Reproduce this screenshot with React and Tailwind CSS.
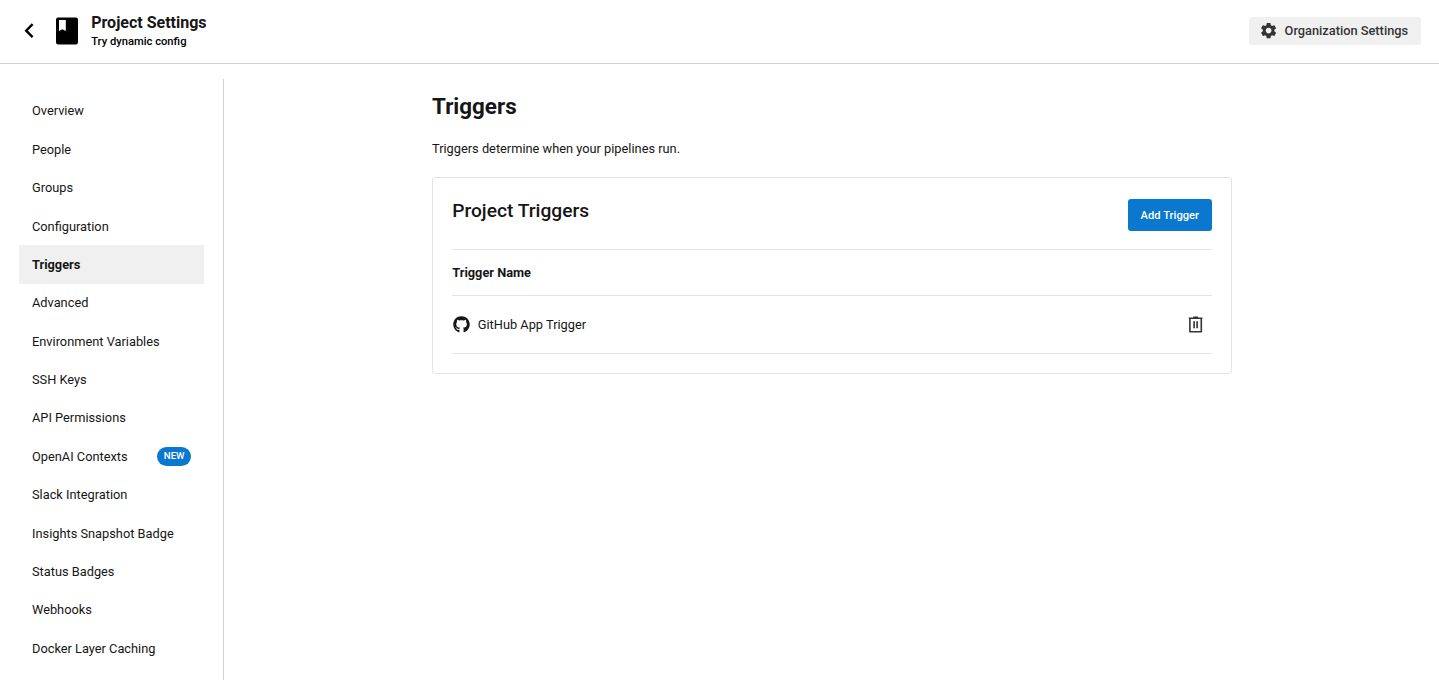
import React from "react";
import { FaGithub } from "react-icons/fa";
import { MdSettings } from "react-icons/md";

const NAV_ITEMS = [
  { label: "Overview" },
  { label: "People" },
  { label: "Groups" },
  { label: "Configuration" },
  { label: "Triggers", active: true },
  { label: "Advanced" },
  { label: "Environment Variables" },
  { label: "SSH Keys" },
  { label: "API Permissions" },
  { label: "OpenAI Contexts", badge: "NEW" },
  { label: "Slack Integration" },
  { label: "Insights Snapshot Badge" },
  { label: "Status Badges" },
  { label: "Webhooks" },
  { label: "Docker Layer Caching" },
];

function BackIcon() {
  return (
    <svg width="10" height="16" viewBox="0 0 10 16" fill="none" stroke="#000" strokeWidth="2.4">
      <path d="M8.6 1.2 2.2 7.7l6.4 6.5" />
    </svg>
  );
}

function ProjectIcon() {
  return (
    <svg width="22" height="28" viewBox="0 -0.5 22 28">
      <path
        fill="#000"
        fillRule="evenodd"
        d="M2.2 0h17.6A2.2 2.2 0 0 1 22 2.2v22.6a2.2 2.2 0 0 1-2.2 2.2H2.2A2.2 2.2 0 0 1 0 24.8V2.2A2.2 2.2 0 0 1 2.2 0ZM3 2.5v11l3.4-1.7 3.4 1.7v-11Z"
      />
    </svg>
  );
}

function TrashIcon() {
  return (
    <svg width="16" height="18" viewBox="0 0 16 18" fill="none" stroke="#343434">
      <path strokeWidth="1.5" d="M.8 2.2h13.6M5.2 1.2h4.8" />
      <path strokeWidth="1.6" strokeLinejoin="round" d="M1.9 2.2v13.5h11.4V2.2" />
      <path strokeWidth="1.6" d="M6.1 5.3v7M9.1 5.3v7" />
    </svg>
  );
}

function Header() {
  return (
    <header className="flex h-16 shrink-0 items-start justify-between border-b border-[#d0d0d0] pl-6 pr-[18px]">
      <div className="flex items-start">
        <button className="mt-[23px]" aria-label="Back">
          <BackIcon />
        </button>
        <div className="ml-[22.2px] mt-[17px]">
          <ProjectIcon />
        </div>
        <div className="ml-[13px] mt-[13px]">
          <h1 className="text-[16px] font-bold leading-[20px]">Project Settings</h1>
          <p className="text-[11.2px] font-medium leading-[18px] text-black">Try dynamic config</p>
        </div>
      </div>
      <button className="mt-[17px] flex h-7 w-[172px] items-center rounded-[3px] bg-[#f0f0f0] pl-[10px] text-[12.8px] font-medium text-[#343434]">
        <MdSettings className="mr-[6.4px] size-[19.2px]" />
        Organization Settings
      </button>
    </header>
  );
}

function Sidebar() {
  return (
    <nav className="mt-[15px] w-[224px] shrink-0 border-r border-[#d0d0d0] pl-[19.2px] pr-[19px] pt-[12.75px]">
      {NAV_ITEMS.map((item) => (
        <a
          key={item.label}
          className={
            "flex h-[38.4px] items-center justify-between px-[12.8px] text-[12.8px] " +
            (item.active ? "bg-[#f0f0f0] font-bold" : "")
          }
        >
          {item.label}
          {item.badge && (
            <span className="flex h-[19px] w-[34px] items-center justify-center rounded-full bg-[#0b78cf] text-[9.6px] font-medium text-white">
              {item.badge}
            </span>
          )}
        </a>
      ))}
    </nav>
  );
}

function TriggersCard() {
  return (
    <section className="mt-[19px] h-[197px] rounded-[3px] border border-[#e3e3e3] px-[19.2px]">
      <div className="flex h-[72px] items-start justify-between border-b border-[#e3e3e3]">
        <h3 className="mt-[21px] text-[19.2px] font-medium leading-6">Project Triggers</h3>
        <button className="mt-[21px] h-8 w-[84px] rounded-[3px] bg-[#0b78cf] pt-0.5 text-[11.2px] font-medium text-white">
          Add Trigger
        </button>
      </div>
      <div className="flex h-[46px] items-center border-b border-[#e3e3e3] text-[12.8px] font-bold">Trigger Name</div>
      <div className="flex h-[58px] items-center justify-between border-b border-[#e3e3e3] pr-[7.8px] text-[12.8px]">
        <div className="flex items-center">
          <FaGithub className="ml-px mr-[7.6px] size-[17px]" />
          GitHub App Trigger
        </div>
        <button aria-label="Delete trigger">
          <TrashIcon />
        </button>
      </div>
    </section>
  );
}

export default function App() {
  return (
    <div className="flex h-[680px] flex-col overflow-hidden bg-white font-['Roboto',sans-serif] text-[#161616]">
      <Header />
      <div className="flex min-h-0 flex-1">
        <Sidebar />
        <main className="ml-[208px] w-[800px] pt-[28px]">
          <h2 className="text-[22.4px] font-bold leading-[28px]">Triggers</h2>
          <p className="mt-[19px] text-[12.8px] leading-[19px]">Triggers determine when your pipelines run.</p>
          <TriggersCard />
        </main>
      </div>
    </div>
  );
}
